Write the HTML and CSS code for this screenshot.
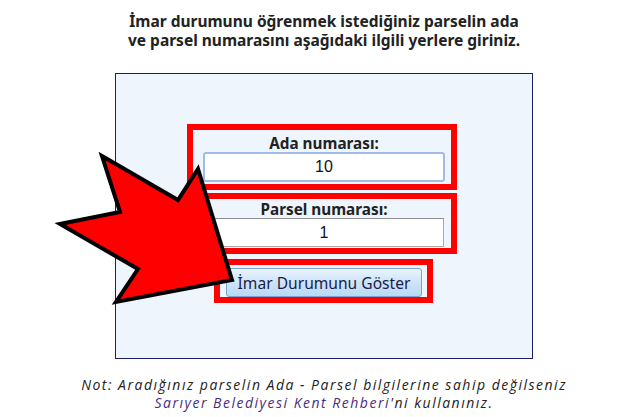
FILE: index.html
```html
<!DOCTYPE html>
<html lang="tr">
<head>
<meta charset="utf-8">
<title>İmar Durumu</title>
<link rel="stylesheet" href="styles.css">
</head>
<body>
<div class="page">
  <p class="intro">İmar durumunu öğrenmek istediğiniz parselin ada<br>ve parsel numarasını aşağıdaki ilgili yerlere giriniz.</p>
  <div class="panel">
    <form class="form">
      <label class="label label-first" for="ada">Ada numarası:</label>
      <input class="field field-focus" id="ada" type="text" value="10">
      <label class="label label-second" for="parsel">Parsel numarası:</label>
      <input class="field field-second" id="parsel" type="text" value="1">
      <button class="btn" type="button">İmar Durumunu Göster</button>
    </form>
  </div>
  <p class="note">Not: Aradığınız parselin Ada - Parsel bilgilerine sahip değilseniz<br><a class="link" href="#">Sarıyer Belediyesi Kent Rehberi</a>'ni kullanınız.</p>

  <div class="mark mark-ada"></div>
  <div class="mark mark-parsel"></div>
  <div class="mark mark-btn"></div>
  <svg class="arrow" width="640" height="417" viewBox="0 0 640 417">
    <polygon points="102,156 178,200 198,169 232,280 116,302 138,269 60,224 120,212" fill="#ff0000" stroke="#000" stroke-width="4" stroke-linejoin="miter"/>
  </svg>
</div>
</body>
</html>
```

FILE: styles.css
```css
html, body {
  margin: 0;
  padding: 0;
  background: #ffffff;
}
.page {
  position: relative;
  width: 640px;
  height: 417px;
  padding-left: 8px;
  box-sizing: border-box;
  overflow: hidden;
}
.intro {
  margin: 0;
  padding-top: 12px;
  text-align: center;
  font-family: "Noto Sans", sans-serif;
  font-weight: bold;
  font-size: 15.5px;
  line-height: 19px;
  color: #222222;
}
.panel {
  width: 416px;
  height: 284px;
  margin: 23px auto 0;
  border: 1px solid #1c1c6c;
  background: #eef5fd;
}
.form {
  display: flex;
  flex-direction: column;
  align-items: center;
  padding-top: 61px;
}
.label {
  font-family: "Noto Sans", sans-serif;
  font-weight: bold;
  font-size: 15.3px;
  line-height: 16px;
  color: #222222;
}
.label-second {
  margin-top: 19px;
}
.field {
  box-sizing: border-box;
  margin: 1px 0 0;
  text-align: center;
  font-family: "Liberation Sans", sans-serif;
  font-size: 16px;
  color: #111111;
  background: #ffffff;
  outline: none;
}
.field-focus {
  width: 242px;
  height: 30px;
  border: 2px solid #9fbde6;
  border-radius: 3px;
}
.field-second {
  width: 240px;
  height: 29px;
  border: 1px solid #a9a9a9;
  border-top-color: #8e8e8e;
}
.btn {
  box-sizing: border-box;
  width: 196px;
  height: 29px;
  margin-top: 21px;
  padding: 0;
  border: 1px solid #7aa3cf;
  border-radius: 3px;
  background: linear-gradient(#e9f4fd, #cde4f8 50%, #b9d9f6);
  font-family: "Noto Sans", sans-serif;
  font-size: 15.6px;
  color: #1a1a4a;
}
.note {
  margin: 17px 0 0;
  text-align: center;
  font-family: "Open Sans", sans-serif;
  font-style: italic;
  font-size: 14px;
  letter-spacing: 1.5px;
  line-height: 18px;
  color: #222222;
}
.link {
  color: #4b2c7d;
  text-decoration: none;
}
.mark {
  position: absolute;
  box-sizing: border-box;
  border: 6px solid #ff0000;
}
.mark-ada {
  left: 187px;
  top: 124px;
  width: 270px;
  height: 66px;
}
.mark-parsel {
  left: 196px;
  top: 193px;
  width: 261px;
  height: 61px;
}
.mark-btn {
  left: 214px;
  top: 259px;
  width: 219px;
  height: 44px;
}
.arrow {
  position: absolute;
  left: 0;
  top: 0;
}
```
